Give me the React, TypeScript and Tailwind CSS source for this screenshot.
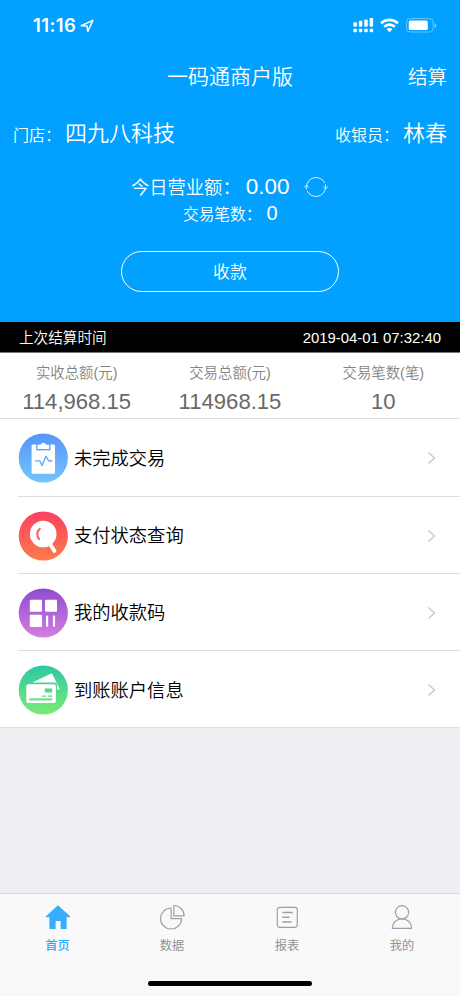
import React from 'react';

const MENU = [
  { title: '未完成交易', icon: 'clipboard' },
  { title: '支付状态查询', icon: 'search' },
  { title: '我的收款码', icon: 'qr' },
  { title: '到账账户信息', icon: 'cards' },
];

const STATS = [
  { label: '实收总额(元)', value: '114,968.15' },
  { label: '交易总额(元)', value: '114968.15' },
  { label: '交易笔数(笔)', value: '10' },
];

const GRADIENTS: Record<string, [string, string]> = {
  clipboard: ['#5694f8', '#74c4fe'],
  search: ['#fc4062', '#fd7b4b'],
  qr: ['#8f4bd0', '#d47ee2'],
  cards: ['#2cc8a4', '#7bea75'],
};

const MenuIcon: React.FC<{ name: string }> = ({ name }) => (
  <svg width="50" height="50" viewBox="0 0 50 50" fill="white">
    <defs>
      <linearGradient id={name} x1="0" y1="0" x2="0" y2="1">
        <stop offset="0" stopColor={GRADIENTS[name][0]} />
        <stop offset="1" stopColor={GRADIENTS[name][1]} />
      </linearGradient>
    </defs>
    <circle cx="25.3" cy="25" r="24.6" fill={`url(#${name})`} />
    {name === 'clipboard' && (
      <>
        <rect x="13.6" y="11.6" width="23.4" height="29.2" rx="1" />
        <path d="M18.2 11h14.2v6.4H18.2z" fill="#5e9ffa" />
        <path d="M19.5 11.8h3a2.9 2.9 0 0 1 5.6 0h3v4.2H19.5z" />
        <path d="M17.5 27.8h4.2l2.4 4.8 3.8-9.4 2.8 4.8h3.2" fill="none" stroke="#5fa6fa" strokeWidth="1.3" strokeLinejoin="round" strokeLinecap="round" />
      </>
    )}
    {name === 'search' && (
      <>
        <circle cx="25.2" cy="23" r="13.3" />
        <path d="M33 34.5l3.4 5.3" stroke="white" strokeWidth="4" strokeLinecap="round" />
        <path d="M21.9 17.8c-3.4 2.8-3.4 7.2-.8 10.2" fill="none" stroke="#fc5b58" strokeWidth="2" strokeLinecap="round" />
      </>
    )}
    {name === 'qr' && (
      <>
        <rect x="11.8" y="11.7" width="12.2" height="12" rx="1" />
        <rect x="27" y="11.7" width="12" height="12" rx="1" />
        <rect x="11.8" y="26.7" width="12.2" height="12.4" rx="1" />
        <rect x="28" y="27.5" width="2.2" height="11.2" rx=".8" />
        <rect x="34.9" y="27.5" width="2.2" height="11.2" rx=".8" />
      </>
    )}
    {name === 'cards' && (
      <>
        <path d="M14.5 17.5L33 8.6a1 1 0 0 1 1.3.5l7.5 15-2.6 1.1v-4.7a3 3 0 0 0-3-3z" />
        <rect x="8.3" y="19.2" width="29.6" height="18.8" rx="1.8" />
        <path d="M26.8 23.4h7.4v4.2h-7.4z" fill="#54d58d" />
        <path d="M23.8 31.1h4.4M29.8 31.1h4.5" stroke="#5cda8a" strokeWidth="1.2" />
        <path d="M11.3 34.4h23" stroke="#62de84" strokeWidth="2" />
      </>
    )}
  </svg>
);

const StatusBar: React.FC = () => (
  <div className="flex h-[50px] items-center justify-between pl-[33px] pr-[23px]">
    <div className="flex items-center gap-1 pt-px font-['Inter','Liberation_Sans',sans-serif] text-[18.5px] font-semibold tracking-[0.4px]">
      11:16
      <svg width="14" height="14" viewBox="0 0 14 14" fill="none" stroke="white" strokeWidth="1.5" strokeLinejoin="round">
        <path d="M1.2 6.8L12.8 1.4 7.8 12.4 7 7.1z" />
      </svg>
    </div>
    <div className="flex items-center">
      <svg width="21" height="16" viewBox="0 0 21 16" fill="white">
        {[0, 1, 2, 3].map(i => (
          <g key={i}>
            <rect x={0.4 + i * 5.4} y={5.2 - i * 1.4} width="3.5" height={4.6 + i * 1.4} rx="1" />
            <rect x={0.4 + i * 5.4} y="11.8" width="3.5" height="3.4" rx="1" />
          </g>
        ))}
      </svg>
      <svg className="ml-1.5" width="19" height="15" viewBox="0 0 19 15" fill="none" stroke="white" strokeWidth="2.6">
        <path d="M1 5.3a12.2 12.2 0 0 1 17 0" />
        <path d="M4.2 8.8a7.6 7.6 0 0 1 10.6 0" />
        <path d="M6.6 11.3a4 4 0 0 1 5.8 0L9.5 14.2z" fill="white" stroke="none" />
      </svg>
      <svg className="ml-[7px]" width="31" height="15" viewBox="0 0 31 15">
        <rect x=".6" y=".6" width="26.6" height="13.4" rx="3.6" fill="none" stroke="white" strokeOpacity=".4" />
        <rect x="2.8" y="2.6" width="19" height="9.4" rx="1.6" fill="white" />
        <path d="M28.6 5v5q1.8-1 1.8-2.5T28.6 5z" fill="white" fillOpacity=".5" />
      </svg>
    </div>
  </div>
);

const TABS = [
  {
    label: '首页',
    icon: <path d="M13 1.2L25 12.3v1h-3.4V25H15.6v-8h-5v8H4.4V13.3H1v-1z" fill="#38adfb" stroke="none" />,
  },
  {
    label: '数据',
    icon: (
      <>
        <path d="M12.1 4A10.5 10.5 0 1 0 22.6 14.7H12.1z" />
        <path d="M14.8 1.5v10.3h10.3A10.3 10.3 0 0 0 14.8 1.5z" />
      </>
    ),
  },
  {
    label: '报表',
    icon: (
      <>
        <rect x="3.3" y="3.3" width="20" height="20" rx="2.5" />
        <path d="M8.3 8.5h10.6M8.3 13.2h7.3M8.3 18h9.2" strokeWidth="1.5" />
      </>
    ),
  },
  {
    label: '我的',
    icon: (
      <>
        <circle cx="13" cy="8.3" r="6.6" />
        <path d="M3.3 24.3c.3-5.5 4-9.4 9.7-9.4s9.3 3.9 9.6 9.4z" />
      </>
    ),
  },
];

const App: React.FC = () => {
  return (
    <div className="flex h-[996px] w-[460px] flex-col overflow-hidden bg-[#eeeef3] font-['Liberation_Sans','Noto_Sans_CJK_SC',sans-serif]">

      {/* Header */}
      <header className="h-[322px] shrink-0 bg-[#02a0ff] text-white">
        <StatusBar />

        <div className="grid h-[54px] grid-cols-[1fr_auto_1fr] items-center pr-[13px]">
          <span />
          <h1 className="pl-[13px] text-[21px] leading-[54px] font-[350]">一码通商户版</h1>
          <span className="pt-px text-right text-[19.5px] font-[350]">结算</span>
        </div>

        <div className="flex h-[60px] items-baseline justify-between pr-[13px] pl-[13px] font-[350] leading-[60px]">
          <div className="flex items-baseline">
            <span className="text-base leading-[60px]">门店：</span>
            <span className="ml-1 text-[22px] leading-[60px]">四九八科技</span>
          </div>
          <div className="flex items-baseline">
            <span className="text-base leading-[60px]">收银员：</span>
            <span className="ml-1 text-[22px] leading-[60px]">林春</span>
          </div>
        </div>

        <div className="mt-[9px] flex h-7 items-center pl-[131px]">
          <span className="pt-0.5 text-[18.3px] font-[350]">今日营业额：</span>
          <span className="ml-[5px] text-[22.5px]">0.00</span>
          <svg className="ml-[15px]" width="24" height="24" viewBox="0 0 24 24" fill="none" stroke="white" strokeWidth="1" strokeOpacity=".85">
            <path d="M2.4 14.5V11.5A9.7 9.7 0 0 1 20.8 8M.2 12.5l2.2-2.4 2.3 2.4" />
            <path d="M21.6 9.5v3A9.7 9.7 0 0 1 3.2 16M19.3 11.5l2.3 2.4 2.2-2.4" />
          </svg>
        </div>
        <div className="flex h-6 items-center pl-[183px]">
          <span className="pt-[3px] text-[15.7px] font-[350]">交易笔数：</span>
          <span className="ml-[5px] text-[20px]">0</span>
        </div>

        <button className="mx-auto mt-[26px] block h-[41px] w-[218px] rounded-full border-[1.5px] border-white pt-[3px] text-[17px] font-[350]">
          收款
        </button>
      </header>

      {/* Last settlement */}
      <div className="flex h-[31px] shrink-0 items-center justify-between border-b border-[#777] bg-black pr-[19px] pl-[19px] text-white">
        <span className="pt-1 text-[14.6px] font-[350]">上次结算时间</span>
        <span className="pt-[3px] text-[14.9px]">2019-04-01 07:32:40</span>
      </div>

      <section className="grid h-[66px] shrink-0 grid-cols-3 border-b border-[#dedfe1] bg-white pt-[8px] text-center">
        {STATS.map(stat => (
          <div key={stat.label}>
            <div className="text-[14.4px] leading-6 font-[350] text-[#858585]">{stat.label}</div>
            <div className="mt-[3px] text-[22.1px] leading-7 text-[#686868]">{stat.value}</div>
          </div>
        ))}
      </section>

      {/* Menu */}
      <nav className="shrink-0 border-b border-[#e0e0e4] bg-white pl-[18px]">
        {MENU.map((item, idx) => (
          <div
            key={item.icon}
            className={`flex items-center pt-0.5 pr-6 ${idx > 0 ? 'h-[77.3px] border-t border-[#dcdde1]' : 'h-[76.5px]'}`}
          >
            <MenuIcon name={item.icon} />
            <span className="ml-1.5 text-[18.3px] font-[350] text-black">{item.title}</span>
            <svg className="ml-auto" width="9" height="14" viewBox="0 0 9 14" fill="none" stroke="#c4c4c8" strokeWidth="1.2">
              <path d="M1.5 1.5L7.5 7l-6 5.5" />
            </svg>
          </div>
        ))}
      </nav>

      {/* Tab bar */}
      <footer className="mt-auto h-[103px] border-t border-[#d8d8dc] bg-[#f9f9f9]">
        <div className="grid h-[90px] grid-cols-4 pt-[10px]">
          {TABS.map((tab, idx) => (
            <div
              key={tab.label}
              className={`flex flex-col items-center text-[12.2px] leading-[18px] ${idx === 0 ? 'font-medium text-[#2caafa]' : 'pr-px text-[#929292]'}`}
            >
              <svg width="26" height="26" viewBox="0 0 26 26" fill="none" stroke="#a0a0a0" strokeWidth="1.2">
                {tab.icon}
              </svg>
              <span className="mt-[7px]">{tab.label}</span>
            </div>
          ))}
        </div>
        <div className="mx-auto -mt-[3px] h-[5px] w-[164px] rounded-full bg-black" />
      </footer>
    </div>
  );
};

export default App;
